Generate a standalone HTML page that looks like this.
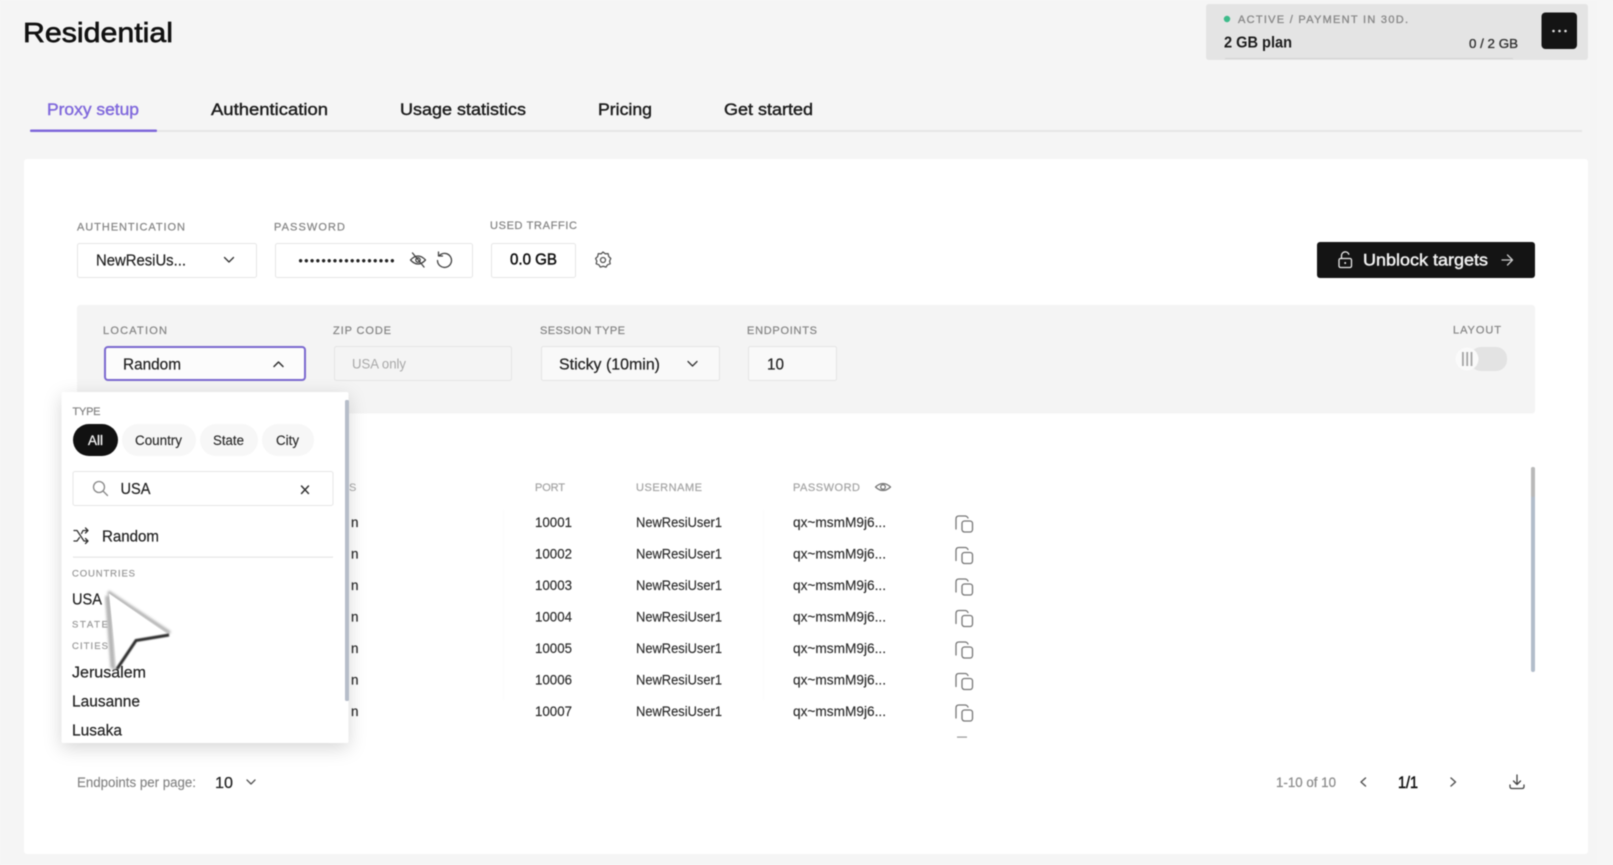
<!DOCTYPE html>
<html lang="en"><head><meta charset="utf-8"><title>Residential</title>
<style>
html,body{margin:0;padding:0;background:#f5f5f5;width:1613px;height:865px;overflow:hidden}
svg{display:block;filter:blur(.45px)}
text{font-family:"Liberation Sans",sans-serif;fill:#1c1c1c}
.lb{font-size:11px;fill:#858585;stroke:#858585;stroke-width:.22}
.tab{font-size:17px;stroke:#1c1c1c;stroke-width:.42}
.m{font-size:15.5px;fill:#222;stroke:#222;stroke-width:.2}
.t{font-size:13.5px;fill:#2a2a2a;stroke:#2a2a2a;stroke-width:.14}
.i{fill:none;stroke:#444;stroke-width:1.3;stroke-linecap:round;stroke-linejoin:round}
.box{fill:#fff;stroke:#e6e6e6;stroke-width:1}
</style></head><body>
<svg width="1613" height="865" viewBox="0 0 1613 865" xmlns="http://www.w3.org/2000/svg">
<defs>
<filter id="sh" x="-20%" y="-20%" width="140%" height="140%"><feDropShadow dx="0" dy="5" stdDeviation="9" flood-color="#000" flood-opacity=".16"/></filter>
<filter id="bl" x="-30%" y="-30%" width="160%" height="160%"><feGaussianBlur stdDeviation="1.3"/></filter>
<filter id="bs" x="-30%" y="-30%" width="160%" height="160%"><feGaussianBlur stdDeviation=".5"/></filter>
<g id="cp" class="i" style="stroke:#777"><path d="M-8 5V-5Q-8-8-5-8H1Q3-8 4-6"/><rect x="-2" y="-3" width="10.500" height="11" rx="2.500"/></g>
</defs>
<rect width="1613" height="865" fill="#f5f5f5"/>
<rect x="1597" y="0" width="16" height="865" fill="#f6f6f6"/>

<text x="23" y="42" font-size="28" textLength="150" lengthAdjust="spacingAndGlyphs" stroke="#111" stroke-width=".65" style="fill:#111">Residential</text>

<!-- plan badge -->
<rect x="1206" y="4" width="382" height="56" rx="3" fill="#e4e4e4"/>
<circle cx="1227" cy="19" r="3.200" fill="#3dbb8a"/>
<text x="1238" y="23" font-size="11" textLength="170" lengthAdjust="spacing" style="fill:#8a8a8a" stroke="#8a8a8a" stroke-width=".35">ACTIVE / PAYMENT IN 30D.</text>
<text x="1224" y="47.500" font-size="15.500" font-weight="700" textLength="68" lengthAdjust="spacingAndGlyphs">2 GB plan</text>
<text x="1469" y="48" font-size="13" textLength="49" lengthAdjust="spacingAndGlyphs" stroke="#333" stroke-width=".35" style="fill:#333">0 / 2 GB</text>
<rect x="1225" y="58" width="288" height="1" fill="#d2d2d2"/>
<rect x="1541.500" y="12.500" width="35.500" height="36.500" rx="4" fill="#141414"/>
<circle cx="1553.500" cy="31" r="1.300" fill="#ddd"/><circle cx="1559.500" cy="31" r="1.300" fill="#ddd"/><circle cx="1565.500" cy="31" r="1.300" fill="#ddd"/>

<!-- tabs -->
<text class="tab" x="47" y="115" textLength="92" lengthAdjust="spacingAndGlyphs" style="fill:#8069dc;stroke:#8069dc">Proxy setup</text>
<text class="tab" x="211" y="115" textLength="117" lengthAdjust="spacingAndGlyphs">Authentication</text>
<text class="tab" x="400" y="115" textLength="126" lengthAdjust="spacingAndGlyphs">Usage statistics</text>
<text class="tab" x="598" y="115" textLength="54" lengthAdjust="spacingAndGlyphs">Pricing</text>
<text class="tab" x="724" y="115" textLength="89" lengthAdjust="spacingAndGlyphs">Get started</text>
<rect x="30" y="130" width="1552" height="2" fill="#e6e6e6"/>
<rect x="30" y="129.500" width="127" height="2.500" rx="1" fill="#7f68da"/>

<!-- card -->
<rect x="24" y="159" width="1564" height="695" rx="3" fill="#fff"/>

<text class="lb" x="77" y="230.500" textLength="108" lengthAdjust="spacing">AUTHENTICATION</text>
<text class="lb" x="274" y="230.500" textLength="71" lengthAdjust="spacing">PASSWORD</text>
<text class="lb" x="490" y="229" textLength="87" lengthAdjust="spacing">USED TRAFFIC</text>

<rect class="box" x="77.500" y="243.500" width="179" height="34" rx="2"/>
<text class="m" x="96" y="265.500" textLength="90" lengthAdjust="spacingAndGlyphs">NewResiUs...</text>
<path class="i" d="M224.500 257.500l4.500 4.500 4.500-4.500" style="stroke:#333"/>

<rect class="box" x="275.500" y="243.500" width="197" height="34" rx="2"/>
<text x="298.500" y="264.500" font-size="12" font-weight="700" textLength="96" lengthAdjust="spacing" style="fill:#222">•••••••••••••••••</text>
<g class="i" style="stroke:#444"><path d="M410.500 260q7.500-8 15 0q-7.500 8-15 0z"/><circle cx="418" cy="260" r="2.200"/><path d="M412.500 253l11.500 14"/></g>
<g class="i" style="stroke:#444"><path d="M439.500 255.500a7 7 0 1 1-2 5"/><path d="M438.500 252v4h4"/></g>

<rect class="box" x="491.500" y="243.500" width="84" height="34" rx="2"/>
<text x="510" y="264.500" font-size="15.500" textLength="47" lengthAdjust="spacingAndGlyphs" stroke="#111" stroke-width=".5" style="fill:#111">0.0 GB</text>
<g class="i" style="stroke:#555"><circle cx="603" cy="260" r="2.500"/><path d="M603 252l2.200 1.800 2.900-.2.600 2.900 2.100 2-1.200 2.500.6 2.800-2.700 1-1.500 2.300-2.800-.8-2.800.8-1.500-2.300-2.700-1 .6-2.800-1.200-2.500 2.100-2 .6-2.900 2.900.2z"/></g>

<rect x="1317" y="242" width="218" height="36" rx="3" fill="#141414"/>
<g class="i" style="stroke:#e8e8e8"><rect x="1339" y="258.500" width="12.500" height="9" rx="1.500"/><path d="M1341.500 258.500v-3a3.800 3.800 0 0 1 7.300-1.300"/></g>
<circle cx="1345.200" cy="263" r="1" fill="#e8e8e8"/>
<text x="1363" y="265.500" font-size="16.500" textLength="125" lengthAdjust="spacingAndGlyphs" stroke="#f2f2f2" stroke-width=".45" style="fill:#f2f2f2">Unblock targets</text>
<path class="i" d="M1502 260h10M1507.500 255l5 5-5 5" style="stroke:#ccc"/>

<!-- grey panel -->
<rect x="77" y="305" width="1458" height="108.500" rx="3" fill="#f4f4f4"/>
<text class="lb" x="103" y="334" textLength="64" lengthAdjust="spacing">LOCATION</text>
<rect x="105" y="347" width="200" height="33" rx="3" fill="#fcfcfc" stroke="#7a68cf" stroke-width="2"/>
<text class="m" x="123" y="369.500" textLength="58" lengthAdjust="spacingAndGlyphs">Random</text>
<path class="i" d="M274 366.500l4.500-4.500 4.500 4.500" style="stroke:#333;stroke-width:1.500"/>

<text class="lb" x="333" y="334" textLength="58" lengthAdjust="spacing">ZIP CODE</text>
<rect x="334.500" y="346.500" width="177" height="34" rx="2" fill="#f4f4f4" stroke="#e4e4e4"/>
<text x="352" y="368.500" font-size="14" textLength="54" lengthAdjust="spacingAndGlyphs" style="fill:#a8a8a8">USA only</text>

<text class="lb" x="540" y="334" textLength="85" lengthAdjust="spacing">SESSION TYPE</text>
<rect x="541.500" y="346.500" width="178" height="34" rx="2" fill="#f9f9f9" stroke="#e4e4e4"/>
<text class="m" x="559" y="369.500" textLength="101" lengthAdjust="spacingAndGlyphs">Sticky (10min)</text>
<path class="i" d="M688 361.500l4.500 4.500 4.500-4.500" style="stroke:#333"/>

<text class="lb" x="747" y="334" textLength="70" lengthAdjust="spacing">ENDPOINTS</text>
<rect x="748.500" y="346.500" width="88" height="34" rx="2" fill="#f9f9f9" stroke="#e4e4e4"/>
<text class="m" x="767" y="369.500" textLength="17" lengthAdjust="spacingAndGlyphs">10</text>

<text class="lb" x="1453" y="333.500" textLength="48" lengthAdjust="spacing">LAYOUT</text>
<rect x="1470" y="347" width="37" height="24" rx="11" fill="#e3e3e3"/>
<circle cx="1467" cy="359" r="11.500" fill="#fafafa"/>
<rect x="1462" y="352" width="1.800" height="14" fill="#a4a4a4"/><rect x="1466.300" y="352" width="1.800" height="14" fill="#a4a4a4"/><rect x="1470.600" y="352" width="1.800" height="14" fill="#a4a4a4"/>

<!-- table -->
<text class="lb" x="535" y="491" textLength="30" lengthAdjust="spacing" style="fill:#a5a5a5;stroke:#a5a5a5">PORT</text>
<text class="lb" x="636" y="491" textLength="66" lengthAdjust="spacing" style="fill:#a5a5a5;stroke:#a5a5a5">USERNAME</text>
<text class="lb" x="793" y="491" textLength="67" lengthAdjust="spacing" style="fill:#a5a5a5;stroke:#a5a5a5">PASSWORD</text>
<text class="lb" x="349" y="491" style="fill:#a5a5a5;stroke:none">S</text>
<g class="i" style="stroke:#777"><path d="M875.500 487q7.500-7 15 0q-7.500 7-15 0z"/><circle cx="883" cy="487" r="2.300"/></g>
<rect x="503" y="510" width="1" height="190" fill="#fbfbfb"/>
<rect x="763" y="510" width="1" height="190" fill="#fbfbfb"/>

<g>
<text class="t" x="351" y="527">n</text><text class="t" x="535" y="527" textLength="37" lengthAdjust="spacingAndGlyphs">10001</text><text class="t" x="636" y="527" textLength="86" lengthAdjust="spacingAndGlyphs">NewResiUser1</text><text class="t" x="793" y="527" textLength="93" lengthAdjust="spacingAndGlyphs">qx~msmM9j6...</text>
<text class="t" x="351" y="558.500">n</text><text class="t" x="535" y="558.500" textLength="37" lengthAdjust="spacingAndGlyphs">10002</text><text class="t" x="636" y="558.500" textLength="86" lengthAdjust="spacingAndGlyphs">NewResiUser1</text><text class="t" x="793" y="558.500" textLength="93" lengthAdjust="spacingAndGlyphs">qx~msmM9j6...</text>
<text class="t" x="351" y="590">n</text><text class="t" x="535" y="590" textLength="37" lengthAdjust="spacingAndGlyphs">10003</text><text class="t" x="636" y="590" textLength="86" lengthAdjust="spacingAndGlyphs">NewResiUser1</text><text class="t" x="793" y="590" textLength="93" lengthAdjust="spacingAndGlyphs">qx~msmM9j6...</text>
<text class="t" x="351" y="621.500">n</text><text class="t" x="535" y="621.500" textLength="37" lengthAdjust="spacingAndGlyphs">10004</text><text class="t" x="636" y="621.500" textLength="86" lengthAdjust="spacingAndGlyphs">NewResiUser1</text><text class="t" x="793" y="621.500" textLength="93" lengthAdjust="spacingAndGlyphs">qx~msmM9j6...</text>
<text class="t" x="351" y="653">n</text><text class="t" x="535" y="653" textLength="37" lengthAdjust="spacingAndGlyphs">10005</text><text class="t" x="636" y="653" textLength="86" lengthAdjust="spacingAndGlyphs">NewResiUser1</text><text class="t" x="793" y="653" textLength="93" lengthAdjust="spacingAndGlyphs">qx~msmM9j6...</text>
<text class="t" x="351" y="684.500">n</text><text class="t" x="535" y="684.500" textLength="37" lengthAdjust="spacingAndGlyphs">10006</text><text class="t" x="636" y="684.500" textLength="86" lengthAdjust="spacingAndGlyphs">NewResiUser1</text><text class="t" x="793" y="684.500" textLength="93" lengthAdjust="spacingAndGlyphs">qx~msmM9j6...</text>
<text class="t" x="351" y="716">n</text><text class="t" x="535" y="716" textLength="37" lengthAdjust="spacingAndGlyphs">10007</text><text class="t" x="636" y="716" textLength="86" lengthAdjust="spacingAndGlyphs">NewResiUser1</text><text class="t" x="793" y="716" textLength="93" lengthAdjust="spacingAndGlyphs">qx~msmM9j6...</text>
</g>
<use href="#cp" x="964" y="524"/><use href="#cp" x="964" y="555.500"/><use href="#cp" x="964" y="587"/><use href="#cp" x="964" y="618.500"/><use href="#cp" x="964" y="650"/><use href="#cp" x="964" y="681.500"/><use href="#cp" x="964" y="713"/>
<rect x="957" y="736.500" width="10" height="1.200" fill="#999"/>

<rect x="1531" y="467" width="4" height="205" rx="2" fill="#b2bdca"/>
<rect x="1531" y="467" width="4" height="30" rx="2" fill="#b9b9b9"/>

<!-- footer -->
<text x="77" y="787" font-size="13.500" textLength="119" lengthAdjust="spacingAndGlyphs" stroke="#858585" stroke-width=".15" style="fill:#858585">Endpoints per page:</text>
<text class="m" x="215" y="788" textLength="18" lengthAdjust="spacingAndGlyphs">10</text>
<path class="i" d="M247 780l4 4 4-4" style="stroke:#555"/>
<text x="1276" y="787" font-size="13.500" textLength="60" lengthAdjust="spacingAndGlyphs" stroke="#8a8a8a" stroke-width=".2" style="fill:#8a8a8a">1-10 of 10</text>
<path class="i" d="M1365.500 778l-4.500 4 4.500 4" style="stroke:#555;stroke-width:1.500"/>
<text x="1398" y="788" font-size="16.500" textLength="20" lengthAdjust="spacingAndGlyphs" stroke="#111" stroke-width=".55" style="fill:#111">1/1</text>
<path class="i" d="M1451 778l4.500 4-4.500 4" style="stroke:#555;stroke-width:1.500"/>
<g class="i" style="stroke:#444"><path d="M1517 775v9M1513.500 781l3.500 3.500 3.500-3.500"/><path d="M1510 785v1.500q0 2 2 2h10q2 0 2-2V785"/></g>

<!-- dropdown -->
<rect x="61.500" y="392" width="287" height="351" rx="2" fill="#fff" filter="url(#sh)"/>
<rect x="345" y="400" width="4" height="301" rx="1.500" fill="#b6bdc9"/>
<text class="lb" x="72.500" y="415" font-size="10.500" textLength="28" lengthAdjust="spacing">TYPE</text>
<rect x="73" y="424" width="45" height="32" rx="16" fill="#111"/>
<text x="88" y="445" font-size="13.500" textLength="15" lengthAdjust="spacingAndGlyphs" stroke="#f2f2f2" stroke-width=".3" style="fill:#f2f2f2">All</text>
<rect x="122" y="424" width="74" height="32" rx="16" fill="#f7f7f7"/>
<text class="t" x="135" y="445" textLength="47" lengthAdjust="spacingAndGlyphs">Country</text>
<rect x="200" y="424" width="58" height="32" rx="16" fill="#f7f7f7"/>
<text class="t" x="213" y="445" textLength="31" lengthAdjust="spacingAndGlyphs">State</text>
<rect x="262" y="424" width="52" height="32" rx="16" fill="#f7f7f7"/>
<text class="t" x="276" y="445" textLength="23" lengthAdjust="spacingAndGlyphs">City</text>

<rect class="box" x="73" y="471.500" width="260" height="34" rx="2"/>
<g class="i" style="stroke:#888"><circle cx="99" cy="487" r="5.500"/><path d="M103 491l4.500 4.500"/></g>
<text class="m" x="120.500" y="494" textLength="30" lengthAdjust="spacingAndGlyphs">USA</text>
<path class="i" d="M301.500 486l7 7.500M308.500 486l-7 7.500" style="stroke:#333;stroke-width:1.500"/>

<g class="i" style="stroke:#333"><path d="M74 530.500h3l7 10.500h4M74 541h3l2.500-3.500M81.500 533.500l1.500-3h5M85.500 528l2.500 2.500-2.500 2.500M85.500 538.500l2.500 2.500-2.500 2.500"/></g>
<text class="m" x="102" y="541.500" textLength="57" lengthAdjust="spacingAndGlyphs">Random</text>
<rect x="73" y="556.500" width="260" height="1.200" fill="#e6e6e6"/>
<text class="lb" x="72" y="576.500" textLength="63" lengthAdjust="spacing" style="font-size:9.500px;fill:#9a9a9a;stroke:#9a9a9a">COUNTRIES</text>
<text class="m" x="72" y="604.500" textLength="30" lengthAdjust="spacingAndGlyphs">USA</text>
<text class="lb" x="72" y="627.500" textLength="36" lengthAdjust="spacing" style="font-size:9.500px;fill:#9a9a9a;stroke:#9a9a9a">STATE</text>
<text class="lb" x="72" y="649" textLength="36" lengthAdjust="spacing" style="font-size:9.500px;fill:#9a9a9a;stroke:#9a9a9a">CITIES</text>
<text class="m" x="72" y="677.500" textLength="74" lengthAdjust="spacingAndGlyphs">Jerusalem</text>
<text class="m" x="72" y="706.500" textLength="68" lengthAdjust="spacingAndGlyphs">Lausanne</text>
<text class="m" x="72" y="735.500" textLength="50" lengthAdjust="spacingAndGlyphs">Lusaka</text>

<!-- cursor -->
<path d="M109 595L114 670M106.500 596L112 668" fill="none" stroke="#b4b4b4" stroke-width="3" filter="url(#bl)"/>
<path d="M108 592L170 633" fill="none" stroke="#b0b0b0" stroke-width="3.500" filter="url(#bl)"/>
<path d="M109 593.500L168 634.500L136 640L117 668Q113 630 109 593.500z" fill="#fff"/>
<path d="M169 635L136 640.500L117 669" fill="none" stroke="#2e2e2e" stroke-width="3" filter="url(#bs)"/>
</svg>
</body></html>
